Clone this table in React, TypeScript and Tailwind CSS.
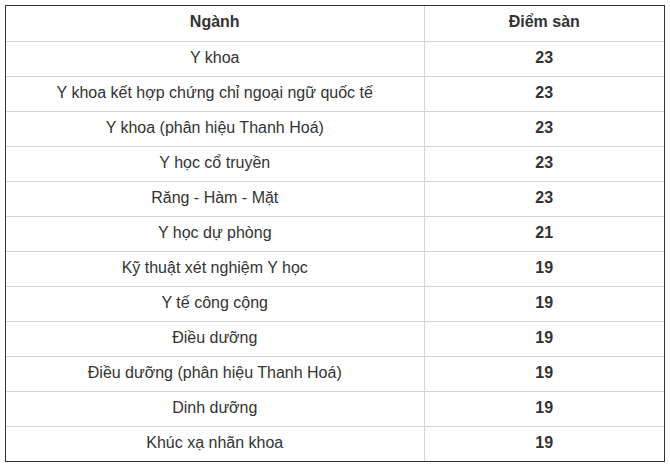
import React from 'react';

const rows: [string, string][] = [
  ['Y khoa', '23'],
  ['Y khoa kết hợp chứng chỉ ngoại ngữ quốc tế', '23'],
  ['Y khoa (phân hiệu Thanh Hoá)', '23'],
  ['Y học cổ truyền', '23'],
  ['Răng - Hàm - Mặt', '23'],
  ['Y học dự phòng', '21'],
  ['Kỹ thuật xét nghiệm Y học', '19'],
  ['Y tế công cộng', '19'],
  ['Điều dưỡng', '19'],
  ['Điều dưỡng (phân hiệu Thanh Hoá)', '19'],
  ['Dinh dưỡng', '19'],
  ['Khúc xạ nhãn khoa', '19'],
];

const App: React.FC = () => {
  return (
    <div className="h-[464px] w-[670px] overflow-hidden bg-white pt-[5px] pl-[5px] font-['Liberation_Sans',Arial,sans-serif] text-[16px] text-[#333]">
      <div className="w-[660px] border border-[#333]">
        <table className="w-full border-collapse">
          <thead>
            <tr className="h-[35px]">
              <th className="w-[418px] border-r border-b border-[#d4d4d4] p-0 pb-[2px] text-center font-bold">Ngành</th>
              <th className="border-b border-[#d4d4d4] p-0 pb-[2px] text-center font-bold">Điểm sàn</th>
            </tr>
          </thead>
          <tbody>
            {rows.map(([name, score], i) => (
              <tr key={name} className="h-[35px]">
                <td className={`border-r border-[#d4d4d4] p-0 pb-[2px] text-center ${i < rows.length - 1 ? 'border-b' : ''}`}>{name}</td>
                <td className={`border-[#d4d4d4] p-0 pb-[2px] text-center font-bold ${i < rows.length - 1 ? 'border-b' : ''}`}>{score}</td>
              </tr>
            ))}
          </tbody>
        </table>
      </div>
    </div>
  );
};

export default App;
